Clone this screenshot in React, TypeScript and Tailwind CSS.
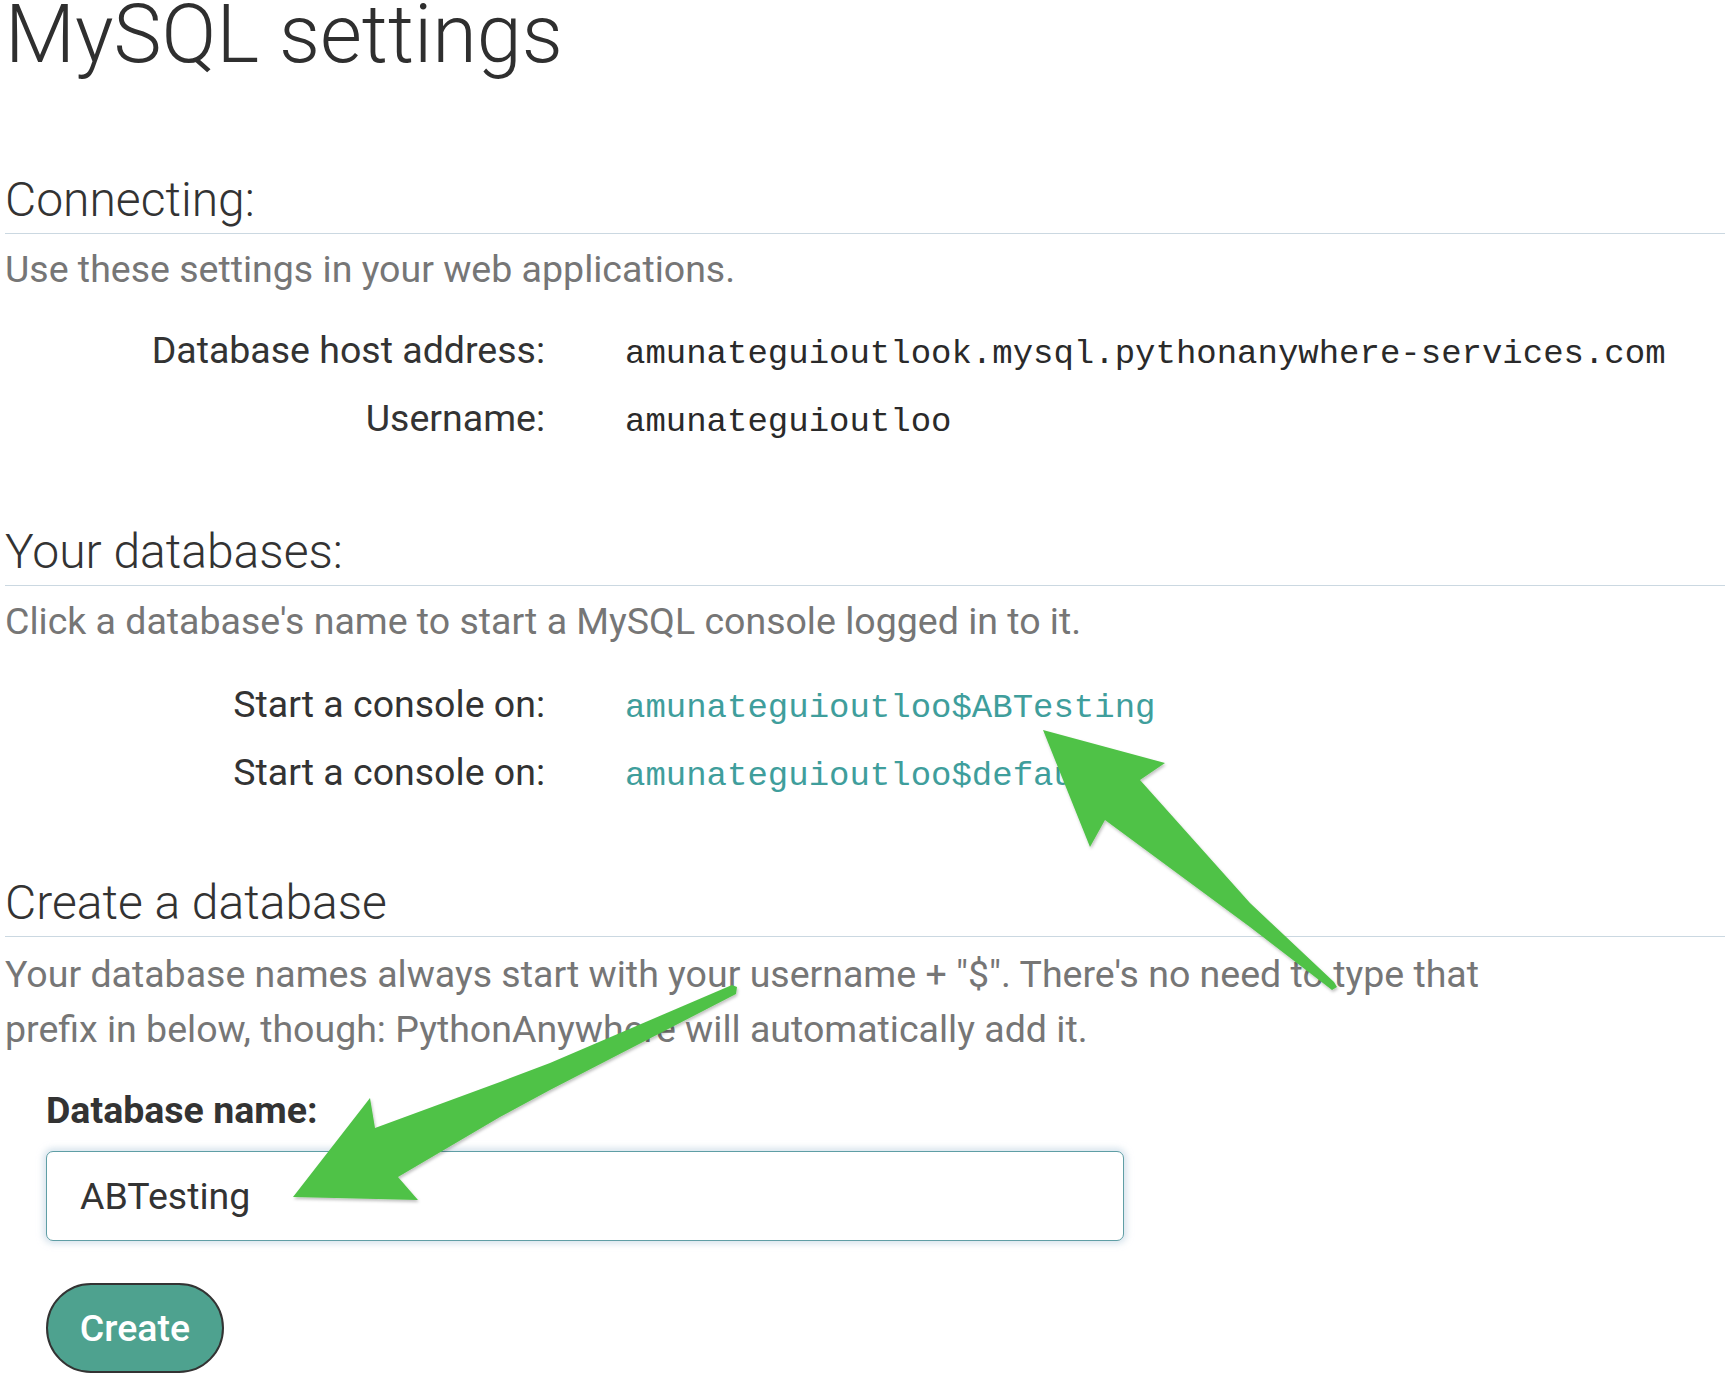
import React from "react";

const rowsConnecting = [
  { label: "Database host address:", value: "amunateguioutlook.mysql.pythonanywhere-services.com" },
  { label: "Username:", value: "amunateguioutloo" },
];

const consoles = ["amunateguioutloo$ABTesting", "amunateguioutloo$default"];

function SectionHeading({ children }: { children: React.ReactNode }) {
  return (
    <h2 className="border-b border-[#cbd8e1] pb-[9px] text-[48px] font-light leading-[48px] text-[#333]">
      {children}
    </h2>
  );
}

function Row({ label, children }: { label: string; children: React.ReactNode }) {
  return (
    <div className="flex items-baseline gap-[80px] text-[37.5px] leading-[68px]">
      <div className="w-[540px] shrink-0 text-right text-[#333]">{label}</div>
      <div className="font-['Liberation_Mono',monospace] text-[34px] leading-none whitespace-nowrap">{children}</div>
    </div>
  );
}

function Arrows() {
  return (
    <svg
      className="pointer-events-none absolute left-0 top-0"
      width="1725"
      height="1376"
      viewBox="0 0 1725 1376"
    >
      <defs>
        <filter id="sh" x="-10%" y="-10%" width="120%" height="120%">
          <feDropShadow dx="1" dy="2" stdDeviation="1.5" floodColor="#000" floodOpacity="0.25" />
        </filter>
      </defs>
      <polygon
        filter="url(#sh)"
        fill="#50c247"
        points="1043,730 1165,763 1140,780 1250,903 1334,982 1337,987 1332,990 1250,927 1105,820 1090,847"
      />
      <polygon
        filter="url(#sh)"
        fill="#50c247"
        points="293,1197 370,1098 375,1128 500,1082 550,1063 732,985 737,987 736,994 550,1090 500,1117 398,1177 418,1200"
      />
    </svg>
  );
}

export default function App() {
  return (
    <div className="relative h-[1376px] w-[1725px] overflow-hidden bg-white pl-[5px] font-['Roboto',sans-serif] text-[#333]">
      <h1 className="text-[81px] font-light leading-[70px] text-[#2f2f2f]">MySQL settings</h1>

      <section className="mt-[106px]">
        <SectionHeading>Connecting:</SectionHeading>
        <p className="mt-[8px] text-[37.5px] leading-[55px] text-[#767676]">
          Use these settings in your web applications.
        </p>
        <div className="mt-[19px]">
          {rowsConnecting.map((r) => (
            <Row key={r.label} label={r.label}>
              <span className="text-[#2a2a2a]">{r.value}</span>
            </Row>
          ))}
        </div>
      </section>

      <section className="mt-[76px]">
        <SectionHeading>Your databases:</SectionHeading>
        <p className="mt-[8px] text-[37.5px] leading-[55px] text-[#767676]">
          Click a database's name to start a MySQL console logged in to it.
        </p>
        <div className="mt-[21px]">
          {consoles.map((c) => (
            <Row key={c} label="Start a console on:">
              <a href="#" className="text-[#3f9e9c]">
                {c}
              </a>
            </Row>
          ))}
        </div>
      </section>

      <section className="mt-[73px]">
        <SectionHeading>Create a database</SectionHeading>
        <p className="mt-[10px] text-[37.5px] leading-[55px] text-[#767676]">
          Your database names always start with your username + "$". There's no need to type that
          <br />
          prefix in below, though: PythonAnywhere will automatically add it.
        </p>
        <form className="pl-[41px]" onSubmit={(e) => e.preventDefault()}>
          <label className="mt-[33px] block text-[37.5px] font-bold leading-[41px] text-[#333]">
            Database name:
          </label>
          <input
            defaultValue="ABTesting"
            className="mt-[20px] block h-[90px] w-[1078px] rounded-[7px] border border-[#5f9ea5] bg-white pl-[33px] text-[37.5px] text-[#333] shadow-[0_0_6px_3px_rgba(190,210,225,0.6)] outline-none"
          />
          <button
            type="submit"
            className="mt-[42px] block h-[90px] w-[178px] rounded-full border-2 border-[#333] bg-[#4ea28f] text-[37.5px] font-medium text-white"
          >
            Create
          </button>
        </form>
      </section>

      <Arrows />
    </div>
  );
}
